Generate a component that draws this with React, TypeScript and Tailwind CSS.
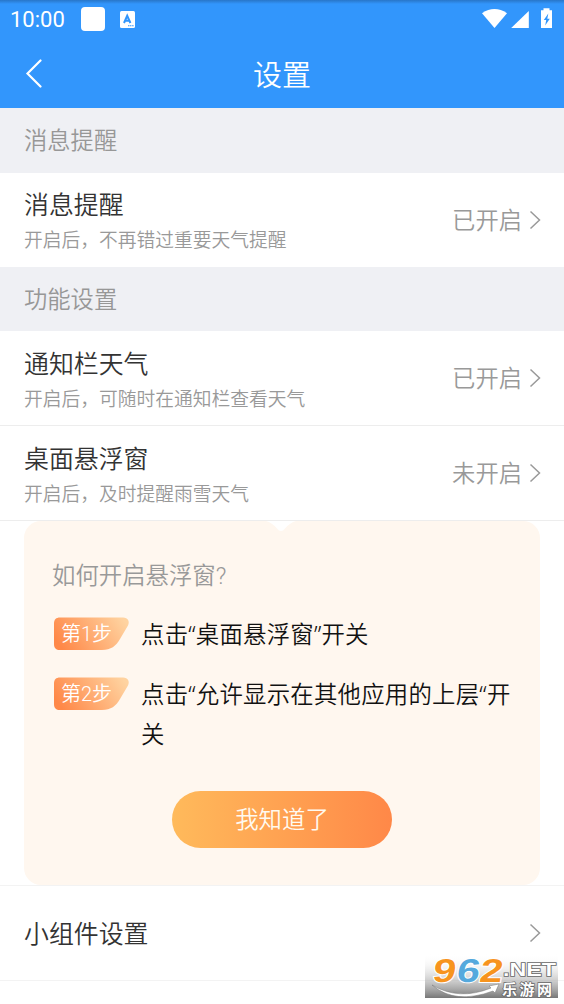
interface SettingRowProps {
    title: string;
    hint?: string;
    status?: string;
}

function StatusBar() {
    return (
        <div className="flex h-[40px] items-center justify-between bg-linear-to-b from-[#2876c8] via-[#3296fc] via-10% to-[#3296fc] pl-[10px] pr-[11px] text-white">
            <div className="flex items-center">
                <span className="w-[55px] text-[22px] font-[450] leading-[40px] whitespace-nowrap">10:00</span>
                <span className="ml-[16px] mt-[-2px] size-[24px] rounded-[4px] bg-white" />
                <svg className="ml-[15px] mt-[-2px]" width="15" height="17" viewBox="0 0 15 17">
                    <rect width="15" height="17" rx="1.5" fill="#fff" />
                    <path d="M4 12 7.2 4.8 10.4 12M5.3 9.7h3.8" fill="none" stroke="#3296fc" strokeWidth="2" />
                    <path d="M8 14.7h6" stroke="#3296fc" strokeWidth="1.1" strokeDasharray="1.3 .5" />
                </svg>
            </div>
            <svg className="mt-[-2px]" width="72" height="22" viewBox="482 8 72 22" fill="#fff">
                <path d="M483 13.2Q495.500 4.800 508 13.200L495.500 28Z" />
                <path d="M529.800 11v17H512.200Z" />
                <path
                    fillRule="evenodd"
                    d="M544.500 8.200h6v2h2.500v17.800h-11v-17.800h2.500ZM549.300 13.500 544.800 20h2.400l-1 5.500 4.600-6.700h-2.500Z"
                />
            </svg>
        </div>
    );
}

function Header() {
    return (
        <div className="grid h-[68px] grid-cols-3 items-center bg-[#3296fc] text-white">
            <svg className="ml-[24px] mb-[1px]" width="20" height="30" viewBox="0 0 20 30" fill="none">
                <path d="M16.500 1.500 3.500 14.500l13 13" stroke="currentColor" strokeWidth="2.200" strokeLinecap="round" />
            </svg>
            <h1 className="pt-[4px] text-center text-[29px] leading-[65px]">设置</h1>
        </div>
    );
}

function SectionTitle({ children }: { children: string }) {
    return <h2 className="h-[64.500px] bg-[#eff0f4] pl-[24px] pt-[1.400px] text-[23.300px] leading-[64px] text-[#979797]">{children}</h2>;
}

function Arrow() {
    return (
        <svg width="12" height="20" viewBox="0 0 12 20" fill="none">
            <path d="m1.500 1.500 9 8.500-9 8.500" stroke="#999" strokeWidth="1.500" />
        </svg>
    );
}

function SettingRow({ title, hint, status }: SettingRowProps) {
    return (
        <div className="flex h-[94px] items-center justify-between pl-[24px] pr-[23px]">
            <div className={hint ? 'pt-[6px]' : 'pt-[3px]'}>
                <div className="text-[24.900px] leading-[36px] text-[#333]">{title}</div>
                {hint && <div className="mt-[1px] text-[18.750px] leading-[32px] text-[#999]">{hint}</div>}
            </div>
            <div className="flex items-center gap-[7px]">
                {status && <span className="pt-[2px] text-[23.300px] leading-[36px] text-[#999]">{status}</span>}
                <Arrow />
            </div>
        </div>
    );
}

function Step({ index, children }: { index: number; children: string }) {
    return (
        <div className="flex items-start gap-[11px]">
            <div className="grid shrink-0">
                <svg className="col-start-1 row-start-1 mt-[2px]" width="76" height="34" viewBox="0 0 76 34">
                    <defs>
                        <linearGradient id={`step${index}`} x1="0" y1="0.600" x2="1" y2="0.300">
                            <stop stopColor="#ff8848" />
                            <stop offset="1" stopColor="#ffd3a0" />
                        </linearGradient>
                    </defs>
                    <path
                        d="M6 .5h63c5 0 7 4 5 8l-8 13.500c-4 7-9 11-18 11H6c-4 0-6-2-6-6V6.500c0-4 2-6 6-6Z"
                        fill={`url(#step${index})`}
                    />
                </svg>
                <span className="col-start-1 row-start-1 pl-[7px] text-[20px] leading-[38px] text-white">第{index}步</span>
            </div>
            <p className="-mt-px font-['Noto_Sans','Noto_Sans_CJK_SC',sans-serif] text-[23.400px] leading-[40px] tracking-[0.240px] text-[#111]">
                {children}
            </p>
        </div>
    );
}

function GuidePanel() {
    return (
        <div className="mx-[24px] flex h-[364px] flex-col rounded-[17px] bg-[#fff7ef]">
            <svg className="mr-[2px] self-center" width="30" height="12" viewBox="0 0 30 12">
                <path d="M0 0q6 1.500 11 7.500 4 5 8 0Q24 1.500 30 0Z" fill="#fff" />
            </svg>
            <div className="px-[28px] pt-[23px]">
                <div className="text-[23.400px] leading-[40px] text-[#999]">如何开启悬浮窗?</div>
                <div className="mt-[19px] ml-[2px] flex flex-col gap-[21px]">
                    <Step index={1}>点击“桌面悬浮窗”开关</Step>
                    <Step index={2}>点击“允许显示在其他应用的上层“开关</Step>
                </div>
            </div>
            <button className="mt-[37px] ml-[148px] h-[57px] w-[220px] rounded-full bg-linear-to-r from-[#ffba5b] to-[#ff8848] pt-[2px] text-[23.400px] text-[#fffaf0]">
                我知道了
            </button>
        </div>
    );
}

function Watermark() {
    return (
        <svg className="absolute left-[425px] top-[954px] overflow-visible" width="133" height="44" viewBox="0 0 133 44">
            <defs>
                <linearGradient id="shade" x2="0" y2="1">
                    <stop stopColor="#fff" stopOpacity="0" />
                    <stop offset="1" stopColor="#777" />
                </linearGradient>
            </defs>
            <rect width="133" height="44" fill="url(#shade)" />
            <g
                transform="translate(5 0) skewX(-9)"
                stroke="#fff"
                strokeWidth="2"
                paintOrder="stroke"
                fontFamily="Liberation Sans"
                fontWeight="700"
                fontSize="33"
            >
                <text x="6" y="28" textLength="23" lengthAdjust="spacingAndGlyphs" fill="#f7941e">9</text>
                <text x="30" y="28" textLength="23" lengthAdjust="spacingAndGlyphs" fill="#55a9dd">6</text>
                <text x="53" y="28" textLength="23" lengthAdjust="spacingAndGlyphs" fill="#f7941e">2</text>
            </g>
            <path d="M7 31q27 16 59 3l-2-2 10-2-4 9-2-2Q30 51 7 31Z" fill="#fff" stroke="#777" strokeWidth=".5" />
            <g fill="#fff" stroke="#666" strokeWidth="1.400" paintOrder="stroke" fontWeight="700">
                <text x="78" y="21.500" fontFamily="Liberation Sans" fontSize="18" textLength="53" lengthAdjust="spacingAndGlyphs">.NET</text>
                <text x="77" y="40.500" fontFamily="Noto Sans CJK SC" fontSize="15" textLength="50">乐游网</text>
            </g>
        </svg>
    );
}

export default function App() {
    return (
        <main className="relative h-[1004px] w-[564px] overflow-hidden bg-white font-[Roboto,'Noto_Sans_CJK_SC',sans-serif] font-[350]">
            <StatusBar />
            <Header />
            <SectionTitle>消息提醒</SectionTitle>
            <SettingRow title="消息提醒" hint="开启后，不再错过重要天气提醒" status="已开启" />
            <SectionTitle>功能设置</SectionTitle>
            <SettingRow title="通知栏天气" hint="开启后，可随时在通知栏查看天气" status="已开启" />
            <div className="border-y border-[#ededed]">
                <SettingRow title="桌面悬浮窗" hint="开启后，及时提醒雨雪天气" status="未开启" />
            </div>
            <GuidePanel />
            <div className="border-y border-[#f3f3f3]">
                <SettingRow title="小组件设置" />
            </div>
            <Watermark />
        </main>
    );
}
